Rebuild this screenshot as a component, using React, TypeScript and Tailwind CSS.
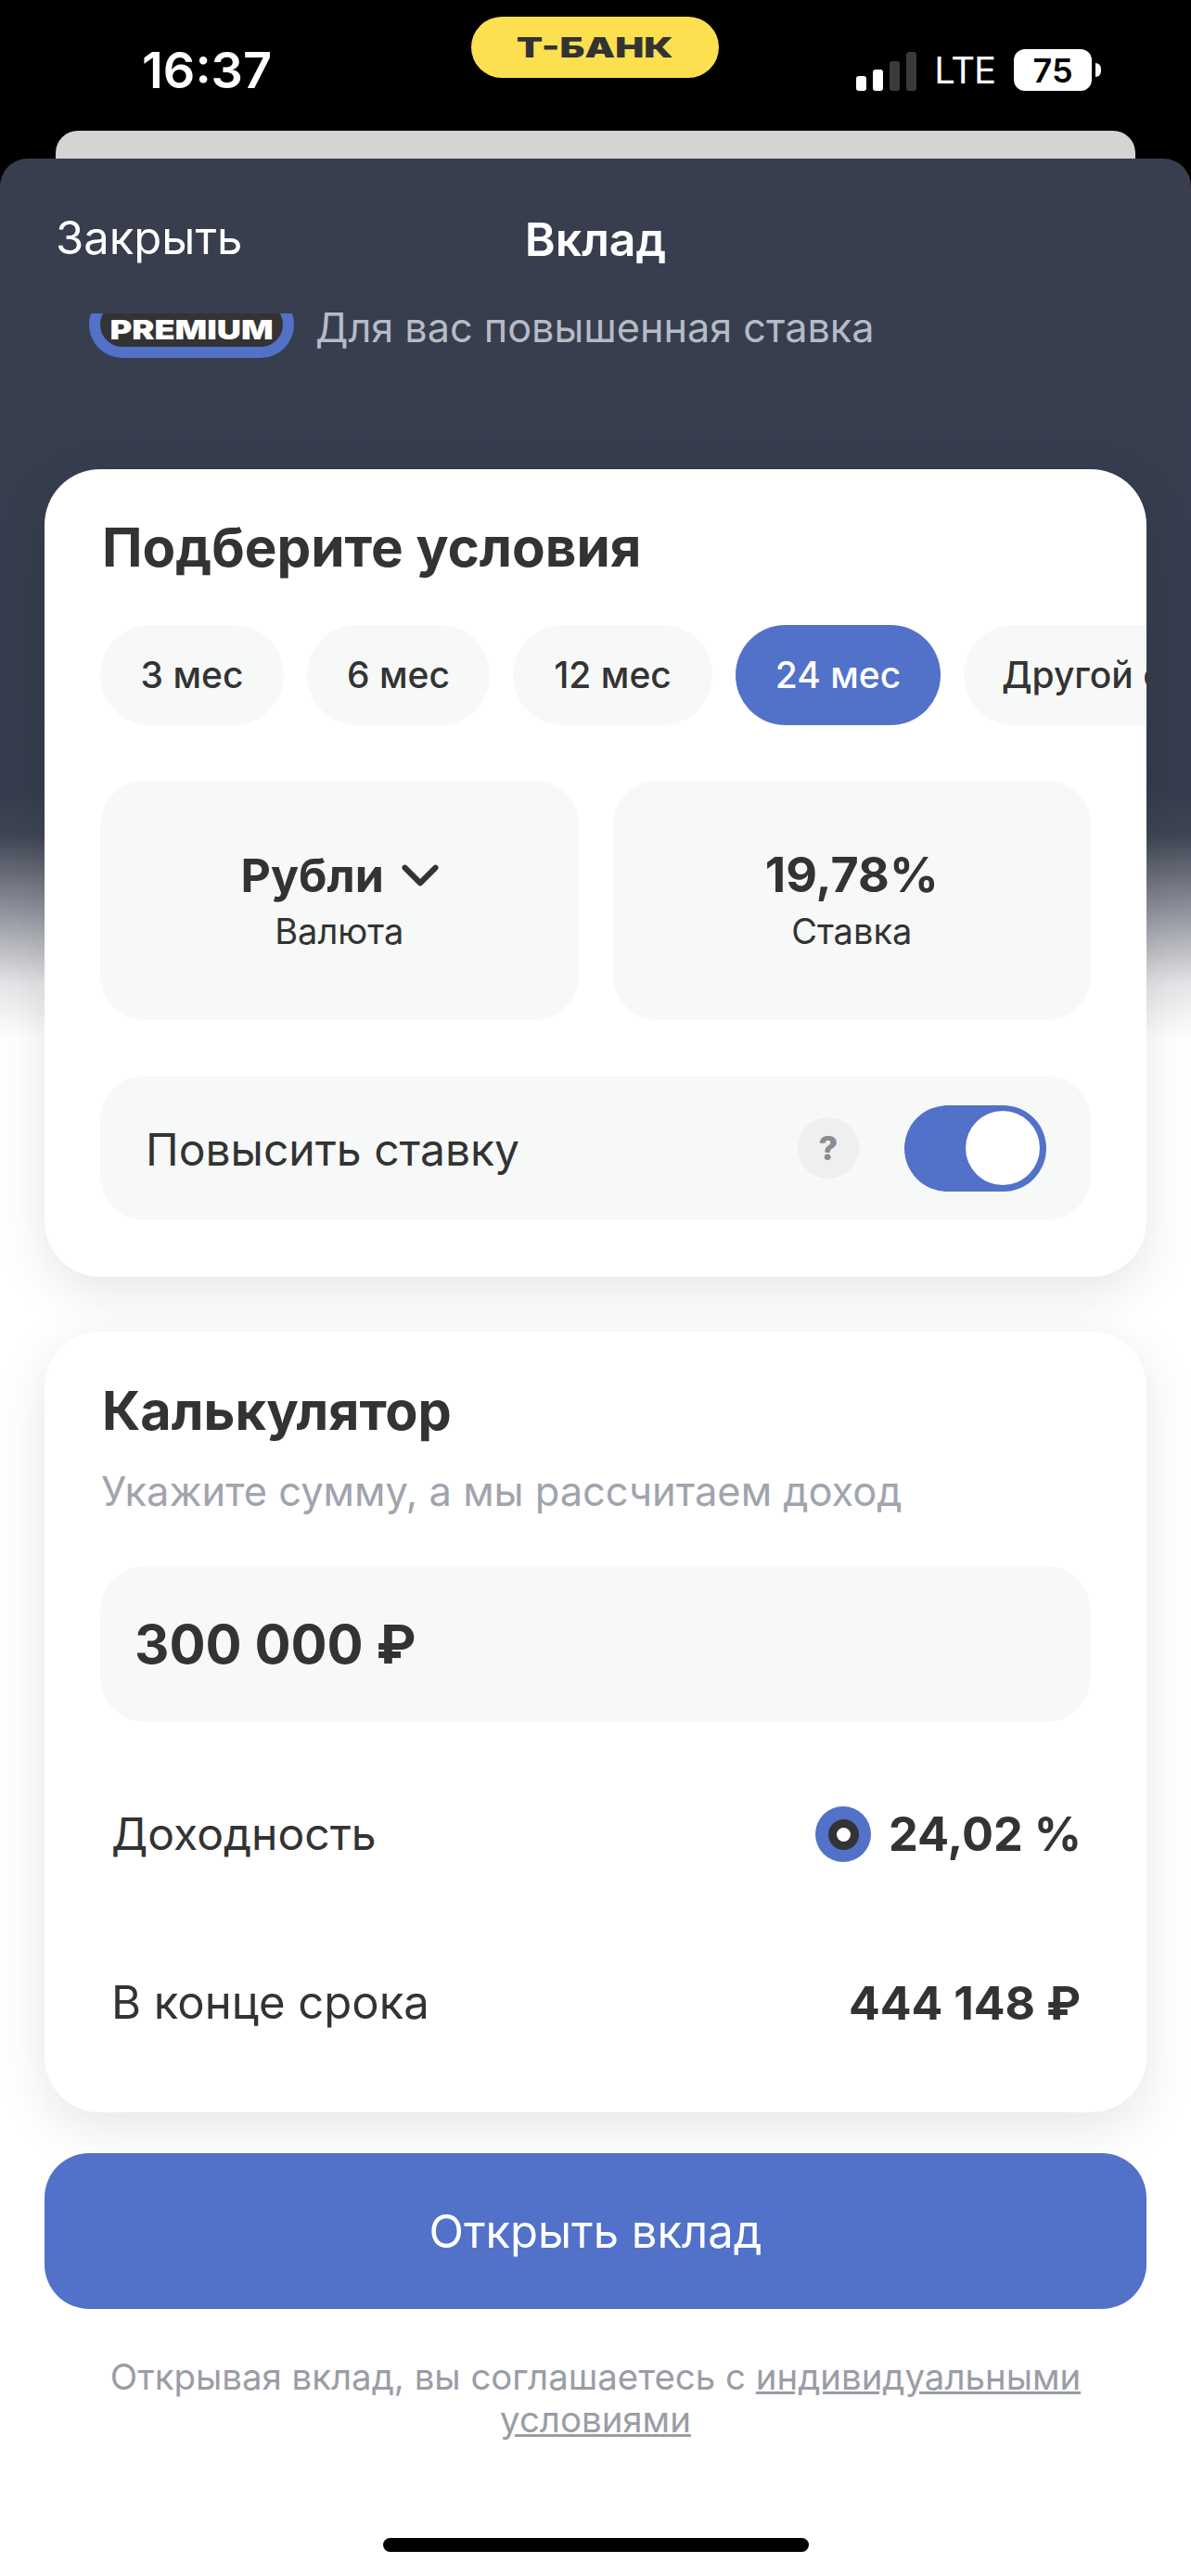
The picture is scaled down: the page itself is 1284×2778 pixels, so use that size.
import { ChevronDown } from "lucide-react";

const terms = [
  { label: "3 мес", width: "w-[198px]" },
  { label: "6 мес", width: "w-[197px]" },
  { label: "12 мес", width: "w-[215px]" },
  { label: "24 мес", width: "w-[221px]", active: true },
  { label: "Другой срок", width: "w-[326px]" },
];

function StatusBar() {
  return (
    <div className="h-[141px] shrink-0 bg-black flex items-start pl-[153px] pr-[97px]">
      <div className="w-[140px] mt-[46px] text-white text-[54px] leading-[60px] font-semibold">16:37</div>
      <div className="w-[267px] h-[66px] mt-[18px] ml-[215px] rounded-[33px] bg-[#fde050] flex items-center justify-center">
        <span className="text-[#333333] text-[30px] leading-none font-black scale-x-[1.38]">Т-БАНК</span>
      </div>
      <div className="flex items-end mt-[53px] ml-auto">
        <div className="flex items-end gap-[7px] h-[43px]">
          <div className="w-[11px] h-[16px] rounded-[3px] bg-white" />
          <div className="w-[11px] h-[23px] rounded-[3px] bg-white" />
          <div className="w-[11px] h-[32px] rounded-[3px] bg-[#3a3a3a]" />
          <div className="w-[11px] h-[42px] rounded-[3px] bg-[#3a3a3a]" />
        </div>
        <span className="ml-[19px] text-white text-[40px] leading-[45px] font-normal tracking-[-1px]">LTE</span>
        <div className="ml-[20px] w-[84px] h-[45px] rounded-[12px] bg-white flex items-center justify-center text-black text-[36px] font-semibold leading-none">
          75
        </div>
        <div className="ml-[4px] mb-[15px] w-[6px] h-[15px] rounded-r-full bg-white" />
      </div>
    </div>
  );
}

function PremiumBadge() {
  return (
    <div className="w-[221px] h-[48px] overflow-hidden flex items-end shrink-0">
      <div className="w-full h-[72px] rounded-[36px] bg-[#5271c9] p-[12px]">
        <div className="h-full rounded-full bg-[#333333] flex items-center justify-center pt-[10px]">
          <span className="text-white text-[29px] leading-none font-black scale-x-[1.25]">PREMIUM</span>
        </div>
      </div>
    </div>
  );
}

export default function App() {
  return (
    <div className="w-[1284px] h-[2778px] bg-black flex flex-col font-['Inter',sans-serif] text-[#333333] overflow-hidden">
      <StatusBar />
      <div className="h-[30px] shrink-0 mx-[60px] rounded-t-[24px] bg-[#d4d4d4]" />

      <div className="flex-1 rounded-t-[30px] bg-[linear-gradient(180deg,#383e4e_0px,#353d4e_680px,#3f4554_730px,#8f929b_810px,#e4e5e7_890px,#ffffff_950px)] flex flex-col">
        <div className="h-[167px] shrink-0 flex items-center relative px-[60px] pt-[4px]">
          <span className="text-white text-[49px] leading-none">Закрыть</span>
          <span className="absolute inset-x-0 mt-[2px] text-center text-white text-[50px] leading-none font-semibold">Вклад</span>
        </div>

        <div className="flex items-start gap-[23px] pl-[96px] h-[168px] shrink-0">
          <PremiumBadge />
          <span className="-mt-[12px] text-[#b6bbc6] text-[43.2px] leading-[54px]">Для вас повышенная ставка</span>
        </div>

        <div className="mx-[48px] h-[871px] shrink-0 rounded-[60px] bg-white shadow-[0_16px_56px_rgba(0,0,0,0.1)] overflow-hidden pt-[52px] flex flex-col">
          <h2 className="pl-[62px] text-[58.3px] leading-[64px] font-bold">Подберите условия</h2>
          <div className="flex gap-[25px] pl-[60px] mt-[52px] overflow-hidden">
            {terms.map((t) => (
              <div
                key={t.label}
                className={`${t.width} h-[108px] shrink-0 rounded-[54px] flex items-center justify-center text-[39px] font-medium whitespace-nowrap ${
                  t.active ? "bg-[#5271c9] text-white" : "bg-[#f7f9f9]"
                }`}
              >
                {t.label}
              </div>
            ))}
          </div>

          <div className="grid grid-cols-2 gap-[37px] mx-[60px] mt-[60px]">
            <div className="h-[258px] rounded-[48px] bg-[#f7f9f9] flex flex-col items-center pt-[75px]">
              <div className="flex items-center gap-[6px] h-[54px] pl-[14px]">
                <span className="text-[50px] leading-[54px] font-bold">Рубли</span>
                <ChevronDown size={66} strokeWidth={2.2} />
              </div>
              <span className="text-[38px] leading-[46px] mt-[10px]">Валюта</span>
            </div>
            <div className="h-[258px] rounded-[48px] bg-[#f7f9f9] flex flex-col items-center pt-[75px]">
              <span className="text-[52px] leading-[54px] font-bold">19,78%</span>
              <span className="text-[38px] leading-[46px] mt-[10px]">Ставка</span>
            </div>
          </div>

          <div className="mx-[60px] mt-[60px] h-[156px] rounded-[48px] bg-[#f7f9f9] flex items-center pl-[49px] pr-[48px]">
            <span className="flex-1 pt-[3px] text-[48px] leading-none">Повысить ставку</span>
            <div className="w-[66px] h-[66px] rounded-full bg-[#eef0f0] flex items-center justify-center text-[#8a8c90] text-[36px] font-extrabold">
              ?
            </div>
            <div className="ml-[49px] w-[153px] h-[93px] rounded-full bg-[#5271c9] flex items-center justify-end pr-[7px]">
              <div className="w-[80px] h-[80px] rounded-full bg-white" />
            </div>
          </div>
        </div>

        <div className="mx-[48px] mt-[59px] h-[842px] shrink-0 rounded-[60px] bg-white shadow-[0_16px_56px_rgba(0,0,0,0.1)] pt-[53px] flex flex-col">
          <h2 className="pl-[62px] text-[57.5px] leading-[64px] font-bold">Калькулятор</h2>
          <p className="pl-[61px] mt-[28px] text-[#a0a4ad] text-[43.4px] leading-[54px]">
            Укажите сумму, а мы рассчитаем доход
          </p>
          <div className="mx-[60px] mt-[54px] h-[168px] rounded-[48px] bg-[#f7f9f9] flex items-center pl-[37px] text-[58px] font-bold">
            300 000 ₽
          </div>
          <div className="flex items-center justify-between pl-[72px] pr-[70px] mt-[91px] h-[60px]">
            <span className="text-[48px]">Доходность</span>
            <div className="flex items-center gap-[19px]">
              <div className="w-[60px] h-[60px] rounded-full bg-[#5271c9] flex items-center justify-center">
                <div className="w-[33px] h-[33px] rounded-full bg-[#333333] flex items-center justify-center">
                  <div className="w-[15px] h-[15px] rounded-full bg-white" />
                </div>
              </div>
              <span className="text-[50.5px] font-bold">24,02 %</span>
            </div>
          </div>
          <div className="flex items-center justify-between pl-[72px] pr-[71px] mt-[122px] h-[60px]">
            <span className="text-[49px]">В конце срока</span>
            <span className="text-[50px] font-bold">444 148 ₽</span>
          </div>
        </div>

        <button className="mx-[48px] mt-[44px] h-[168px] shrink-0 rounded-[48px] bg-[#5271c9] pt-[2px] text-white text-[49px]">
          Открыть вклад
        </button>

        <p className="mt-[50px] mx-auto w-[1100px] text-center text-[#9a9da6] text-[38.4px] leading-[46px]">
          Открывая вклад, вы соглашаетесь с <span className="underline">индивидуальными условиями</span>
        </p>

        <div className="mt-[105px] mx-auto w-[459px] h-[15px] rounded-full bg-black shrink-0" />
      </div>
    </div>
  );
}
